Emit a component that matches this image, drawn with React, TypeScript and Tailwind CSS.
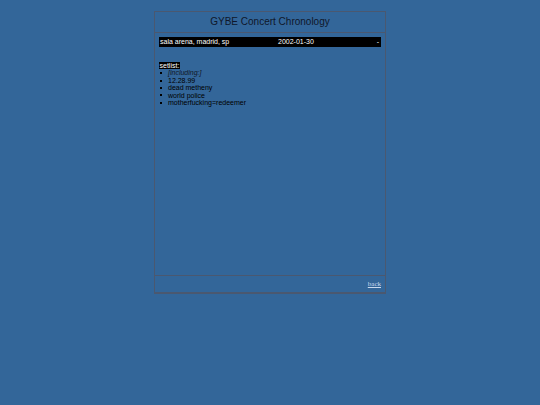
export default function App() {
  const songs = ["12.28.99", "dead metheny", "world police", "motherfucking=redeemer"];

  return (
    <div className="min-h-[405px] bg-[#336699] pt-[11px] font-['Liberation_Sans',Arial,sans-serif] text-black">
      <div className="mx-auto flex h-[283px] w-[232px] flex-col border-x border-t border-b-2 border-solid border-[#4a5870]">
        {/* title row */}
        <div className="flex h-[21px] items-center justify-center border-b border-solid border-[#4a5870] text-[10px] leading-none text-[#0f172a]">
          GYBE Concert Chronology
        </div>

        {/* show details */}
        <div className="flex-1 px-[4px] pt-[4px]">
          <div className="flex h-[9.5px] items-center bg-black pl-[1px] pr-[2px] text-[7px] leading-none text-white">
            <span className="w-[118px]">sala arena, madrid, sp</span>
            <span className="flex-1">2002-01-30</span>
            <span>-</span>
          </div>

          <div className="mt-[15px] text-[7px] leading-[7.4px]">
            <span className="bg-black px-[0.5px] text-white">setlist:</span>
            <ul className="mt-[0.5px]">
              <li className="flex items-center">
                <span className="ml-[1px] mr-[6px] inline-block h-[2px] w-[2px] bg-black" />
                <span className="italic text-[#111827]">[including:]</span>
              </li>
              {songs.map((s) => (
                <li key={s} className="flex items-center">
                  <span className="ml-[1px] mr-[6px] inline-block h-[2px] w-[2px] bg-black" />
                  <span>{s}</span>
                </li>
              ))}
            </ul>
          </div>
        </div>

        {/* footer */}
        <div className="flex h-[17px] items-center justify-end border-t border-solid border-[#4a5870] pr-[4px]">
          <a href="#" className="font-['Liberation_Serif',serif] text-[7px] leading-none text-[#c9d9ee] underline">
            back
          </a>
        </div>
      </div>
    </div>
  );
}
